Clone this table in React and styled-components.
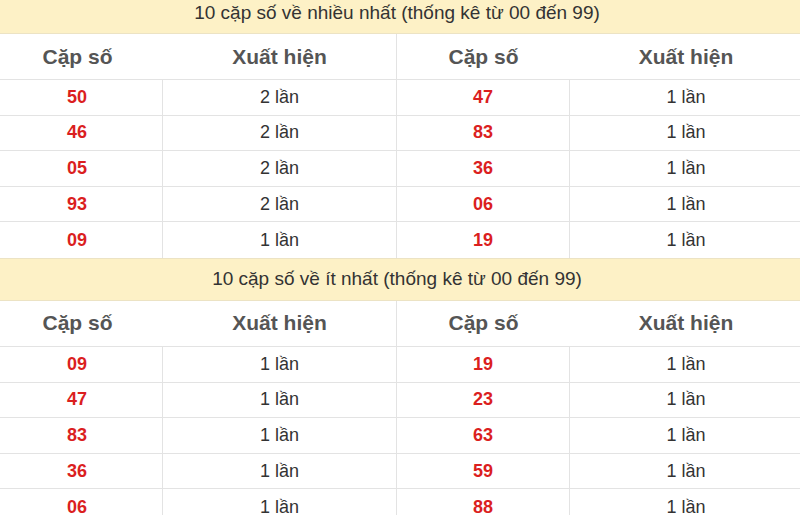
import React from "react";
import styled, { createGlobalStyle } from "styled-components";

const GlobalStyle = createGlobalStyle`
  body {
    margin: 0;
    background: #fff;
    overflow: hidden;
    font-family: "Liberation Sans", Arial, sans-serif;
  }
`;

const Page = styled.div`
  width: 810px;
  margin: -9px 0 0 -8px;
`;

const Title = styled.div`
  height: 43px;
  box-sizing: border-box;
  display: flex;
  align-items: center;
  justify-content: center;
  background: #fdf1c6;
  border-top: 1px solid #ece3c4;
  border-bottom: 1px solid #ece3c4;
  color: #333;
  font-size: 19px;
`;

const Grid = styled.div`
  display: grid;
  grid-template-columns: 1fr 1fr;
`;

const Half = styled.div`
  border-right: ${(p) => (p.$first ? "1px solid #e3e3e3" : "none")};
`;

const Row = styled.div`
  display: grid;
  grid-template-columns: ${(p) => (p.$first ? "171px 1fr" : "173px 1fr")};
  height: ${(p) => (p.$head ? "46px" : "35.6px")};
  box-sizing: border-box;
  border-bottom: 1px solid #e3e3e3;
  &:last-child {
    border-bottom: none;
  }
`;

const Cell = styled.div`
  display: flex;
  align-items: center;
  justify-content: center;
  border-right: ${(p) => (p.$divided ? "1px solid #e3e3e3" : "none")};
  color: ${(p) => (p.$head ? "#555" : p.$num ? "#db1f1f" : "#333")};
  font-size: ${(p) => (p.$head ? "21px" : "18px")};
  font-weight: ${(p) => (p.$head || p.$num ? "bold" : "normal")};
`;

const sections = [
  {
    title: "10 cặp số về nhiều nhất (thống kê từ 00 đến 99)",
    left: [["50", 2], ["46", 2], ["05", 2], ["93", 2], ["09", 1]],
    right: [["47", 1], ["83", 1], ["36", 1], ["06", 1], ["19", 1]],
  },
  {
    title: "10 cặp số về ít nhất (thống kê từ 00 đến 99)",
    left: [["09", 1], ["47", 1], ["83", 1], ["36", 1], ["06", 1]],
    right: [["19", 1], ["23", 1], ["63", 1], ["59", 1], ["88", 1]],
  },
];

const StatHalf = ({ rows, first }) => (
  <Half $first={first}>
    <Row $head $first={first}>
      <Cell $head>Cặp số</Cell>
      <Cell $head>Xuất hiện</Cell>
    </Row>
    {rows.map(([num, count], i) => (
      <Row key={i} $first={first}>
        <Cell $num $divided>{num}</Cell>
        <Cell>{count} lần</Cell>
      </Row>
    ))}
  </Half>
);

const App = () => {
  return (
    <Page>
      <GlobalStyle />
      {sections.map((s) => (
        <div key={s.title}>
          <Title>{s.title}</Title>
          <Grid>
            <StatHalf rows={s.left} first />
            <StatHalf rows={s.right} />
          </Grid>
        </div>
      ))}
    </Page>
  );
};

export default App;
